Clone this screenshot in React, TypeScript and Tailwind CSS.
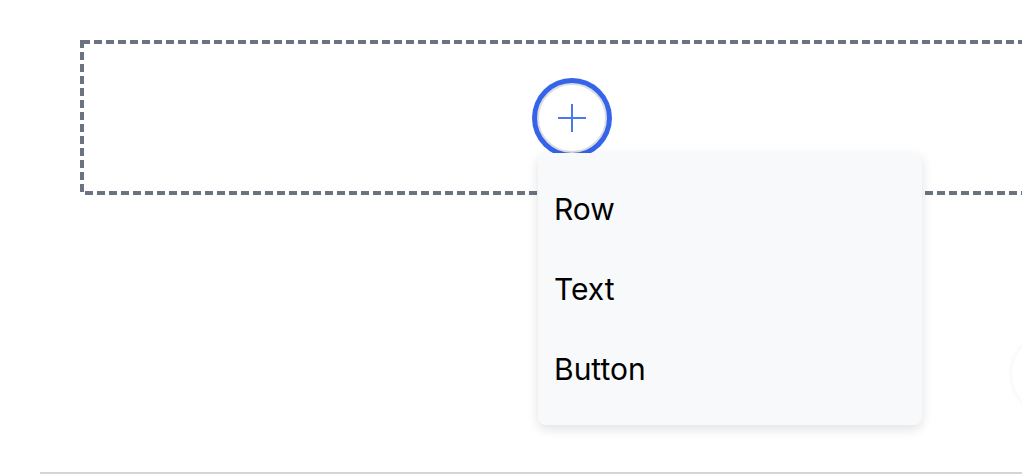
import React from "react";

const items = ["Row", "Text", "Button"];

export default function App() {
  return (
    <div className="w-full h-[474px] overflow-hidden bg-white relative font-['Inter',sans-serif]">
      <div className="w-[1144px] px-10">
        {/* Canvas drop zone */}
        <div className="pt-10 px-10">
          <div className="relative h-[155px] flex items-center justify-center">
            <svg className="absolute inset-0 pointer-events-none" width="984" height="155">
              <rect
                x="2"
                y="2"
                width="980"
                height="151"
                fill="none"
                stroke="#6b7280"
                strokeWidth="4"
                strokeDasharray="8 4"
              />
            </svg>
            <div className="relative">
              <button className="w-[70px] h-[70px] rounded-full bg-white border-2 border-[#dcdde1] ring-[5px] ring-[#3563e9] shadow-[0_0_10px_rgba(0,0,0,0.08)] flex items-center justify-center">
                <svg width="30" height="30" viewBox="0 0 30 30" fill="none">
                  <path d="M15 1v28M1 15h28" stroke="#4a79ef" strokeWidth="2" />
                </svg>
              </button>

              {/* Add menu */}
              <div className="absolute left-[1px] top-[70px] z-10 w-[384px] py-4 rounded-lg bg-[#f8f9fb] shadow-[0_4px_12px_rgba(0,0,0,0.12)]">
                {items.map((item) => (
                  <div
                    key={item}
                    className="h-20 px-4 flex items-center text-[30px] leading-none text-black"
                  >
                    {item}
                  </div>
                ))}
              </div>
            </div>
          </div>
        </div>

        <div className="h-[277px]" />
        <div className="h-[2px] bg-[#d4d5d9]" />
      </div>

      {/* partly hidden element at right edge */}
      <div className="absolute left-[1012px] top-[334px] w-20 h-20 rounded-full bg-white shadow-[0_0_6px_rgba(0,0,0,0.06)]" />
    </div>
  );
}
